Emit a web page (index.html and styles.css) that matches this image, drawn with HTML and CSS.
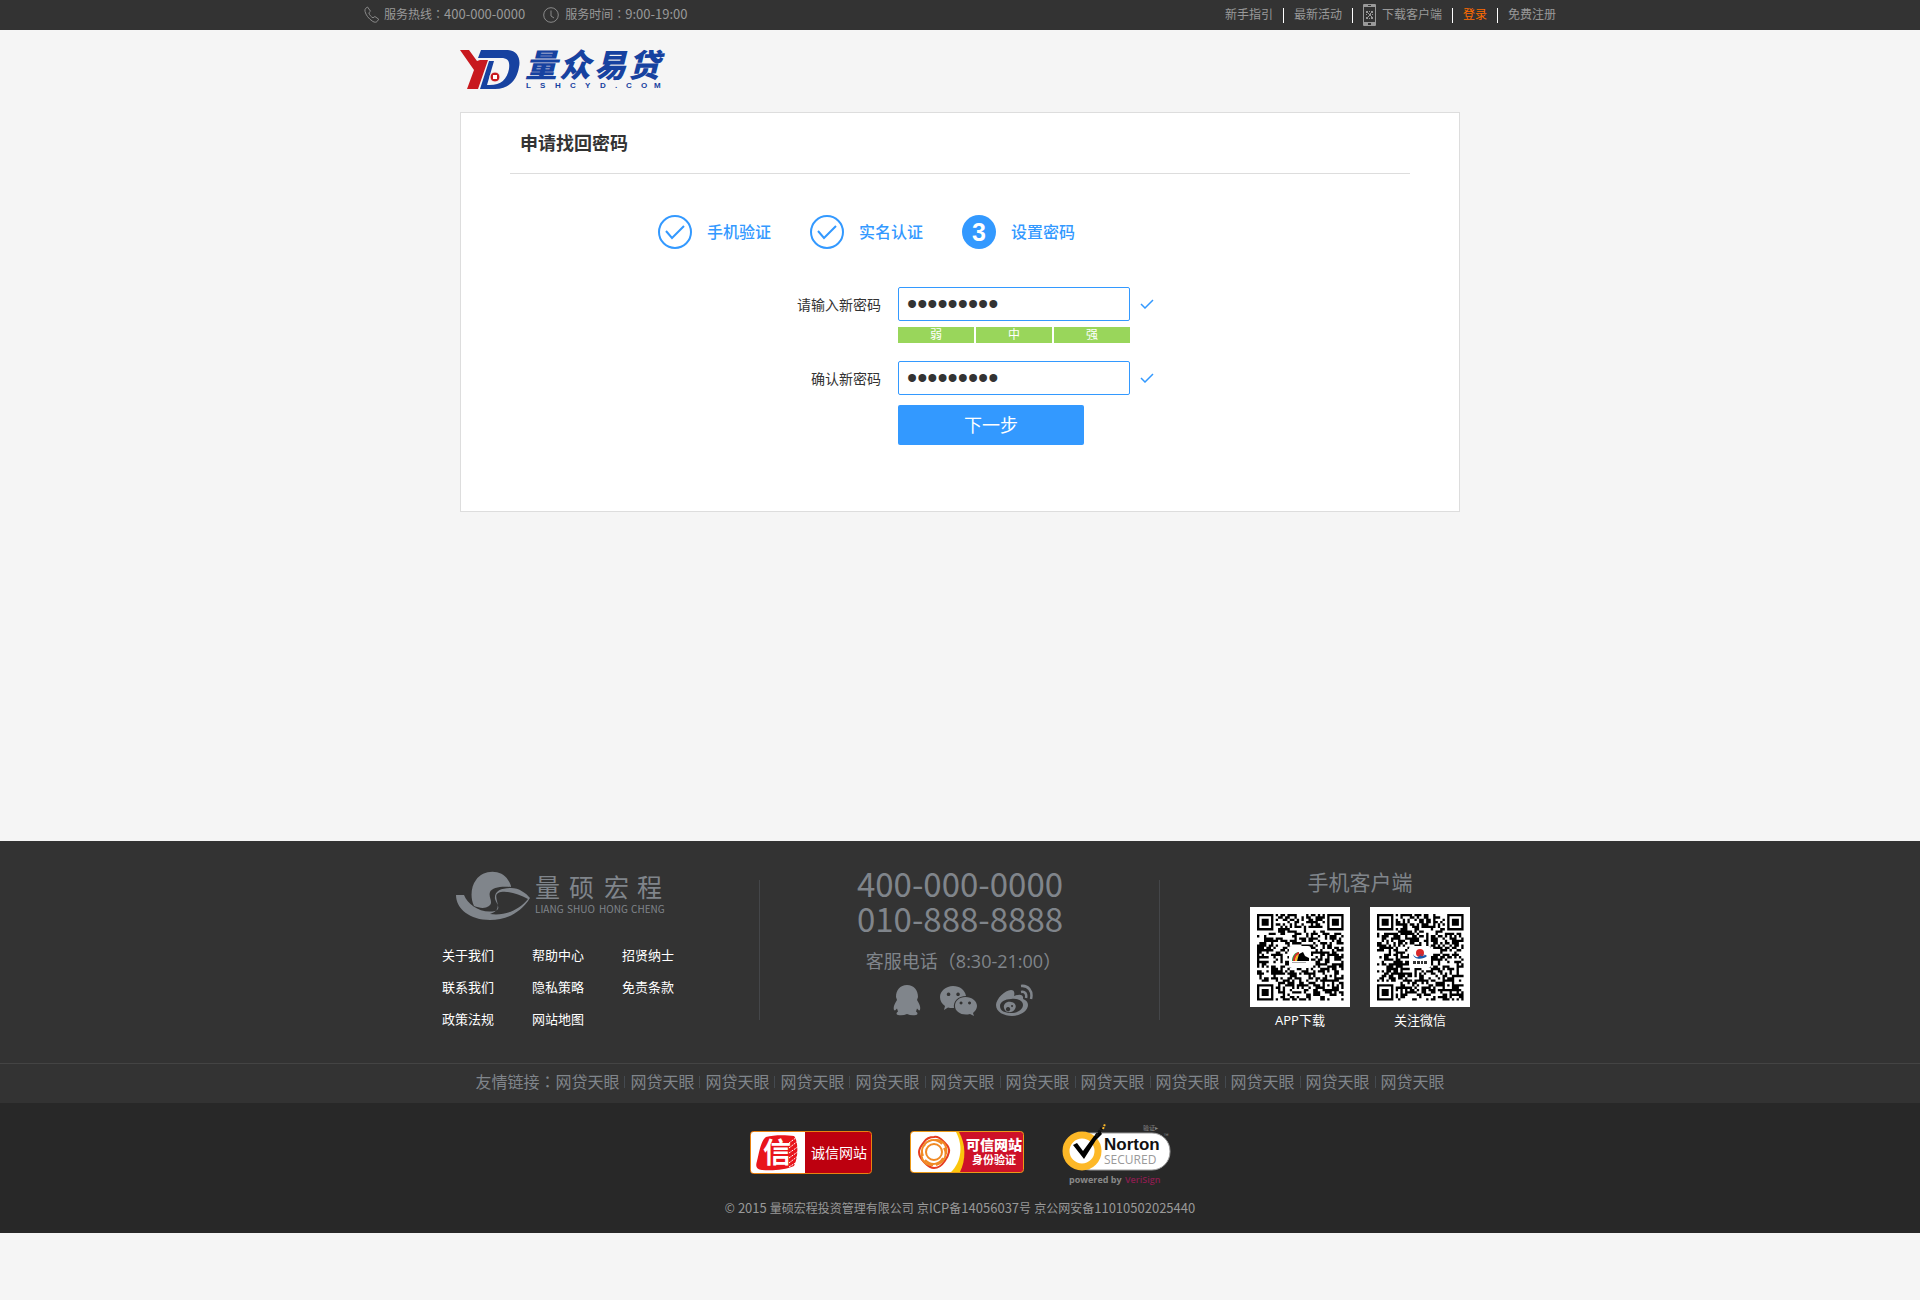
FILE: index.html
```html
<!DOCTYPE html>
<html lang="zh-CN">
<head>
<meta charset="utf-8">
<title>申请找回密码</title>
<link rel="stylesheet" href="styles.css">
</head>
<body>
<div class="topbar">
  <div class="wide topbar-inner">
    <div class="service">
      <svg class="ico-phone" width="16" height="18" viewBox="0 0 16 18"><path d="M1.500 2.500 3.500 1l3 4.200-1.700 1.600c.7 2.200 2 3.800 4.200 5l1.900-1.300 3.800 2.700-1.600 2.300c-1 1-2.600.9-4.200 0C4.600 12.700 1.800 9 1 5.300c-.2-1.200 0-2.200.5-2.800z"/></svg>
      <span>服务热线<span lang="zh-TW" class="centered">：</span><span class="num">400-000-0000</span></span>
      <svg class="ico-clock" width="16" height="16" viewBox="0 0 16 16"><circle cx="8" cy="8" r="7.300"/><path d="M8 3.500V9l3 2"/></svg>
      <span>服务时间<span lang="zh-TW" class="centered">：</span><span class="num">9:00-19:00</span></span>
    </div>
    <nav class="topnav">
      <a href="#">新手指引</a>
      <a href="#">最新活动</a>
      <a href="#" class="app"><svg width="13" height="22" viewBox="0 0 13 22"><path fill="#999" fill-rule="evenodd" d="M1 0h11q1 0 1 1v20q0 1-1 1H1q-1 0-1-1V1q0-1 1-1zm0 3v15h11V3zM5 1v1h3V1zM5 19v2h3v-2z"/><path fill="#999" d="M3 7h2v2H3zM6 7h1v1H6zM8 7h2v2H8zM5 9h1v1H5zM7 9h1v1H7zM3 10h1v1H3zM6 10h2v2H6zM9 10h1v1H9zM5 12h1v1H5zM8 12h1v1H8zM3 13h2v2H3zM6 14h1v1H6zM8 13h2v2H8z"/></svg>下载客户端</a>
      <a href="#" class="login">登录</a>
      <a href="#">免费注册</a>
    </nav>
  </div>
</div>

<header class="page header">
  <a href="#" aria-label="量众易贷">
    <svg width="220" height="48" viewBox="0 -6 220 48">
      <path fill="#c8191e" d="M0 1h9l8 11 3-1h8L18 40H7l7-19z"/>
      <path fill="#1742a0" d="M21 1h25c11 0 15 8 13 17-2 13-10 22-24 22H20l9-28h5l-7 24c13 1 20-5 22-16 1-8-1-11-8-11H18z"/>
      <circle cx="35" cy="28" r="5" fill="#c8191e" stroke="#f4f4f4"/><path fill="#fff" d="M33 26h4v4h-4z"/>
      <text class="brand-name" x="65 99 134 168" y="28">量众易贷</text>
      <text class="brand-url" x="66 80 95 110 125 140 155 166 181 194" y="39">LSHCYD.COM</text>
    </svg>
  </a>
</header>

<main class="page card">
  <h1>申请找回密码</h1>
  <ol class="steps">
    <li><svg width="34" height="34" viewBox="0 0 34 34"><circle cx="17" cy="17" r="16"/><path d="m8 16 6 7L26 11"/></svg>手机验证</li>
    <li><svg width="34" height="34" viewBox="0 0 34 34"><circle cx="17" cy="17" r="16"/><path d="m8 16 6 7L26 11"/></svg>实名认证</li>
    <li><span class="current">3</span>设置密码</li>
  </ol>
  <form>
    <label for="pw">请输入新密码</label>
    <div class="field"><input id="pw" type="password" value="abc123456"><svg width="14" height="10" viewBox="0 0 14 10"><path d="M1 5l4 4 8-8"/></svg></div>
    <div class="strength"><span>弱</span><span>中</span><span>强</span></div>
    <label for="pw2">确认新密码</label>
    <div class="field"><input id="pw2" type="password" value="abc123456"><svg width="14" height="10" viewBox="0 0 14 10"><path d="M1 5l4 4 8-8"/></svg></div>
    <button type="button">下一步</button>
  </form>
</main>

<footer>
  <div class="wide columns">
    <section class="about">
      <svg width="216" height="50" viewBox="0 0 216 50" fill="#80858b">
        <path d="M18 35C14 27 15 15 20 9 27-2 46-2 52 9c2 3 3 5 3 7-9-1-19 0-21 5-2 6 4 10-1 14-4 3-10 2-15 0z"/>
        <path d="M0 24h8c4 10 17 19 31 16 7-2 1-8 0-12-1-8 6-11 16-11 8 0 15 5 19 10-10 16-25 22-40 22C14 49 0 38 0 24zm34 19c14 2 28-3 38-15-9-5-19-8-27-7-6 1-5 5-4 9 2 7 0 11-7 13z"/>
        <text class="company" x="79 113 148 181" y="26">量硕宏程</text>
        <text class="pinyin" x="79" y="42">LIANG</text><text class="pinyin" x="111" y="42">SHUO</text><text class="pinyin" x="143" y="42">HONG</text><text class="pinyin" x="175" y="42">CHENG</text>
      </svg>
      <nav class="site-links">
        <a href="#">关于我们</a><a href="#">帮助中心</a><a href="#">招贤纳士</a>
        <a href="#">联系我们</a><a href="#">隐私策略</a><a href="#">免责条款</a>
        <a href="#">政策法规</a><a href="#">网站地图</a>
      </nav>
    </section>
    <section class="contact">
      <p class="tel">400-000-0000<br>010-888-8888</p>
      <p class="hours">客服电话<span lang="zh-TW" class="centered">（</span>8:30-21:00<span lang="zh-TW" class="centered">）</span></p>
      <div class="social">
        <a href="#" aria-label="QQ"><svg width="28" height="32" viewBox="0 0 28 32"><path d="M14 1c7 0 11 5 11 12l-1 3c2 3 4 7 3 10l-1 .5-2-2-1 3c2 1 2 3 0 3.500-3 .6-6 .4-9-1-3 1.400-6 1.600-9 1-2-.5-2-2.500 0-3.500l-1-3-2 2-1-.5c-1-3 1-7 3-10l-1-3C3 6 7 1 14 1z"/></svg></a>
        <a href="#" aria-label="微信"><svg width="37" height="32" viewBox="0 0 37 32"><path fill-rule="evenodd" d="M13 2c7 0 12 4 13 10-8 0-13 5-12 12-2 .2-4 0-6-.5L4 26l1-4C2 20 0 17 0 13 0 7 6 2 13 2zM8.500 8.500a1.800 1.800 0 1 0 .1 0zm9.500 0a1.800 1.800 0 1 0 .1 0z"/><path fill-rule="evenodd" d="M25.500 13C32 13 37 17 37 22c0 3-2 5-4 7l1 3-4-2c-8 2-15-2-15-8 0-5 4-9 10.500-9zM21 17.500a1.500 1.500 0 1 0 .1 0zm8.500 0a1.500 1.500 0 1 0 .1 0z"/></svg></a>
        <a href="#" aria-label="微博"><svg width="38" height="32" viewBox="0 0 38 32"><path fill-rule="evenodd" d="M0 21C0 15 9 6 15 6c3 0 4 2 3 6 5-2 10-2 9 3 3 1 5 3 5 6 0 6-8 11-16 11S0 28 0 21zm4 1c0 5 5 7 11 7 7 0 12-4 12-8 0-5-6-7-12-6-6 0-11 3-11 7z"/><path fill-rule="evenodd" d="M8 24c-1-4 3-7 7-6 4 0 6 4 4 7-3 5-10 4-11-1zm4-1a2.200 2.200 0 1 0 .1 0zm4-2a1 1 0 1 0 .1 0z"/><path class="wave" d="M25 2c7-1 12 5 10 13M25 8c4-1 6 2 5 6"/></svg></a>
      </div>
    </section>
    <section class="mobile">
      <h2>手机客户端</h2>
      <div class="codes">
        <figure>
          <svg class="qr" data-seed="7" width="100" height="100" viewBox="0 0 100 100"><rect width="100" height="100" fill="#fff"/><path class="modules" transform="translate(7 7) scale(2.340)"/><rect x="39" y="39" width="22" height="22" rx="3" fill="#fff"/><path fill="#2b9b48" d="M42 54c0-5 3-9 7-9v2c-3 0-4 3-5 7z"/><path fill="#d8282a" d="M43 54c0-4 2-8 6-9v3c-2 0-3 2-4 6z"/><path fill="#f4bb24" d="M45 54c0-3 1-6 4-7v2l-2 5z"/><path d="M47 54l2-7 4-2 2 4 4 2v3z"/><path fill="#aaa" d="M42 55h14v1H42z"/></svg>
          <figcaption>APP下载</figcaption>
        </figure>
        <figure>
          <svg class="qr" data-seed="23" width="100" height="100" viewBox="0 0 100 100"><rect width="100" height="100" fill="#fff"/><path class="modules" transform="translate(7 7) scale(2.340)"/><rect x="39" y="39" width="22" height="22" rx="3" fill="#fff"/><circle cx="50" cy="46" r="4" fill="#d8282a"/><path fill="#1c58a8" fill-rule="evenodd" d="M43 47c2 4 6 4 7 1 4-2 6 0 7 1-4 4-13 4-14-2zm7 2c2 0 3 0 5-1-2-1-4 0-5 1z"/><path fill="#333" d="M43 54h3v3h-3zM47 54h3v3h-3zM51 54h2v3h-2zM54 54h3v3h-3z"/></svg>
          <figcaption>关注微信</figcaption>
        </figure>
      </div>
    </section>
  </div>
  <div class="friends">
    <span>友情链接<span lang="zh-TW" class="centered">：</span></span>
    <nav><a href="#">网贷天眼</a><a href="#">网贷天眼</a><a href="#">网贷天眼</a><a href="#">网贷天眼</a><a href="#">网贷天眼</a><a href="#">网贷天眼</a><a href="#">网贷天眼</a><a href="#">网贷天眼</a><a href="#">网贷天眼</a><a href="#">网贷天眼</a><a href="#">网贷天眼</a><a href="#">网贷天眼</a></nav>
  </div>
  <div class="legal">
    <div class="seals">
      <a href="#" aria-label="诚信网站"><svg width="122" height="43" viewBox="0 0 122 43"><rect x=".5" y=".5" width="121" height="42" rx="3" fill="#bd000f"/><path fill="#fff" d="M1 1h54v41H1z"/><rect x=".5" y=".5" width="121" height="42" rx="3" fill="none" stroke="#e88210"/><path fill="#e9151b" d="M16 6c7-2 19-2 28-1 4 4 5 20 0 30-9 4-22 5-32 4-5-1-7-3-5-9 2-8 4-21 9-24z"/><path fill="none" stroke="#fff" stroke-width="1" stroke-dasharray="2 1" d="m39 12 8-6m-8 11 9-7m-9 12 10-7m-10 12 10-7m-10 12 9-7m-9 11 8-5"/><text class="seal-char" x="13" y="32">信</text><text class="seal-label" x="61" y="27">诚信网站</text></svg></a>
      <a href="#" aria-label="可信网站身份验证"><svg width="114" height="42" viewBox="0 0 114 42"><rect x=".5" y=".5" width="113" height="41" rx="3" fill="#ce1229"/><path fill="#fbc60b" d="M3 1h46c7 12 7 28 1 40H3q-2 0-2-2V3q0-2 2-2z"/><path fill="#fff" d="M3 1h43c7 13 6 29-5 40H3q-2 0-2-2V3q0-2 2-2z"/><rect x=".5" y=".5" width="113" height="41" rx="3" fill="none" stroke="#eb9a18"/><g fill="none" stroke-width="2"><path stroke="#e63c20" d="M24 6c5-1 8 3 10 5s6 5 5 10-3 7-5 10-5 6-10 6-7-3-10-6-5-6-5-10 3-7 5-10 5-5 10-5z"/><g stroke="#f08a26"><path d="M14 15c3-7 12-8 18-2M25 9c8-1 13 6 11 14M34 17c4 7 0 15-8 17M33 27c-4 7-12 8-18 2M23 34c-8 1-13-6-11-14M13 25c-3-7 1-14 9-16"/><circle cx="24" cy="21" r="8"/></g></g><text class="trust-title" x="56" y="19">可信网站</text><text class="trust-sub" x="62" y="33">身份验证</text></svg></a>
      <a href="#" aria-label="Norton Secured"><svg width="110" height="64" viewBox="0 0 110 64"><rect x="10" y="10" width="98" height="37" rx="18" fill="#fff" stroke="#999"/><circle cx="20" cy="28" r="16" fill="#fff" stroke="#fdb827" stroke-width="7"/><path d="M11 22l4-2 6 8L32 13l6-5 2 3-6 6-12 19z"/><path stroke="#111" stroke-width="3" stroke-dasharray="3 1" d="m34 13 6-8"/><path stroke="#fdb827" stroke-width="2" stroke-dasharray="2 1" d="m41 6 2-5"/><text class="norton" x="42" y="27">Norton</text><text class="secured" x="42" y="41">SECURED</text><text class="powered" x="7" y="60">powered by</text><text class="powered verisign" x="63" y="60">VeriSign</text><text class="verify" x="81" y="7">验证▸</text><text class="verify" x="102" y="15">™</text></svg></a>
    </div>
    <p>© <span class="num">2015</span> 量硕宏程投资管理有限公司 京<span class="num">ICP</span>备<span class="num">14056037</span>号 京公网安备<span class="num">11010502025440</span></p>
  </div>
</footer>
<script src="qr.js"></script>
</body>
</html>
```
FILE: styles.css
```css
* { box-sizing: border-box; }
body {
  margin: 0;
  background: #f5f5f5;
  color: #333;
  font: 12px/20px "Open Sans", "Noto Sans CJK SC", sans-serif;
}
a { color: inherit; text-decoration: none; }
h1, h2, p, ol, figure { margin: 0; padding: 0; }
svg { display: block; flex: none; }
.wide { max-width: 1200px; margin: 0 auto; }
.page { max-width: 1000px; margin: 0 auto; }
.centered { font-family: "Noto Sans CJK TC", sans-serif; line-height: 1; }
.num { font-family: "Noto Sans CJK SC", sans-serif; font-size: 13px; line-height: 1; }

.topbar { background: #333; color: #999; }
.topbar-inner { display: flex; justify-content: space-between; height: 30px; padding: 0 4px; }
.service, .topnav { display: flex; align-items: center; }
.ico-phone, .ico-clock { fill: none; stroke: #8a8a8a; margin-right: 6px; }
.ico-phone { margin-right: 4px; }
.ico-clock { margin-left: 18px; }
.topnav a { display: flex; align-items: center; height: 15px; padding: 0 10px; border-left: 1px solid #fff; }
.topnav a:first-child { border-left: 0; }
.topnav a:last-child { padding-right: 0; }
.topnav .app { gap: 6px; }
.topnav .login { color: #ff6c00; }

.header { height: 82px; padding-top: 13px; }
.header a { display: inline-block; }
.brand-name { font: italic 900 32px "Noto Sans CJK SC", sans-serif; fill: #1742a0; }
.brand-url { font: bold 8px "Liberation Sans", sans-serif; fill: #1742a0; }

.card { min-height: 400px; padding: 0 49px 65px; background: #fff; border: 1px solid #ddd; }
h1 { padding: 15px 10px 14px; border-bottom: 1px solid #ddd; font-size: 18px; line-height: 31px; }
.steps { display: flex; gap: 39px; padding: 41px 0 0 148px; list-style: none; color: #3399ff; font-size: 16px; font-weight: 500; }
.steps li { display: flex; align-items: center; gap: 15px; }
.steps svg, .field svg { fill: none; stroke: #3399ff; stroke-width: 2; }
.current { width: 34px; height: 34px; border-radius: 50%; background: #3399ff; color: #fff; font: bold 25px/34px "Liberation Sans", sans-serif; text-align: center; }
form { display: grid; grid-template-columns: 371px 1fr; column-gap: 17px; align-items: center; padding-top: 38px; }
label { padding-top: 2px; text-align: right; font-size: 14px; }
.field { display: flex; align-items: center; gap: 10px; }
.field svg { stroke-width: 1.500; }
.field input { width: 232px; height: 34px; padding: 0 8px; border: 1px solid #3399ff; border-radius: 2px; background: #fff; color: #333; font: 29px "Liberation Sans", sans-serif; outline: 0; }
.strength { grid-column: 2; display: grid; grid-template-columns: repeat(3, 76px); gap: 2px; margin: 6px 0 18px; color: #fff; line-height: 16px; text-align: center; }
.strength span { background: #99d65b; }
button { grid-column: 2; width: 186px; height: 40px; margin-top: 10px; padding: 0; border: 0; border-radius: 2px; background: #3399ff; color: #fff; font: 18px/40px "Open Sans", "Noto Sans CJK SC", sans-serif; }

footer { margin-top: 329px; background: #333; color: #80858b; }
.columns { display: grid; grid-template-columns: repeat(3, 1fr); height: 222px; padding-top: 30px; }
.about { padding-left: 82px; }
.about svg { margin-left: 14px; }
.company { font: 25px "Noto Sans CJK SC", sans-serif; }
.pinyin { font: 10px "Noto Sans CJK SC", sans-serif; }
.site-links { display: grid; grid-template-columns: repeat(3, 90px); margin-top: 18px; color: #fff; font-size: 13px; line-height: 32px; }
.contact { display: flex; flex-direction: column; align-items: center; position: relative; }
.contact::before, .contact::after { content: ""; position: absolute; top: 9px; left: -1px; width: 1px; height: 140px; background: #444649; }
.contact::after { left: auto; right: 0; }
.tel { margin-top: -5px; font: 33px/35px "Noto Sans CJK SC", sans-serif; }
.hours { margin: 11px 0 0 7px; font-size: 18px; line-height: 28px; }
.social { display: flex; gap: 19px; margin: 9px 0 0 6px; fill: #80858b; }
.wave { fill: none; stroke: #80858b; stroke-width: 2.500; }
.mobile { display: flex; flex-direction: column; align-items: center; }
h2 { padding-top: 1px; font-size: 21px; font-weight: 400; line-height: 20px; }
.codes { display: flex; gap: 20px; margin-top: 15px; }
figcaption { padding-top: 3px; color: #fff; font-size: 13px; text-align: center; }
.friends { display: flex; justify-content: center; height: 40px; border-top: 1px solid #444; font-size: 16px; line-height: 36px; }
.friends nav { display: flex; align-items: center; height: 36px; }
.friends a { padding: 0 5px; border-left: 1px solid #444a50; line-height: 12px; }
.friends a:first-child { padding-left: 0; border-left: 0; }
.friends a:last-child { padding-right: 0; }
.legal { height: 130px; padding-top: 20px; background: #282828; color: #999; text-align: center; }
.seals { display: flex; justify-content: center; align-items: flex-start; gap: 38px; height: 76px; padding-left: 1px; }
.seals a { padding-top: 8px; }
.seals a:last-child { padding-top: 0; }
.seal-char { font: bold 28px "Noto Sans CJK SC", sans-serif; fill: #fff; }
.seal-label { font: 14px "Noto Sans CJK SC", sans-serif; fill: #fff; }
.trust-title { font: 900 14px "Noto Sans CJK SC", sans-serif; fill: #fff; }
.trust-sub { font: bold 11px "Noto Sans CJK SC", sans-serif; fill: #fff; }
.norton { font: bold 17px "Liberation Sans", sans-serif; fill: #111; }
.secured { font: 12px "Open Sans", sans-serif; fill: #999; }
.powered { font: bold 9px "Open Sans", sans-serif; fill: #888; }
.powered.verisign { fill: #8b1d4f; font-weight: 600; }
.verify { font: 6px "Noto Sans CJK SC", sans-serif; fill: #888; }
```
FILE: qr.js
```js
// Draws each download code as a 37x37 grid of modules.
const SIZE = 37;

function ring(x, y, cx, cy, outer) {
  const d = Math.max(Math.abs(x - cx), Math.abs(y - cy));
  if (d > outer + 1) return null;
  if (outer === 3) return d === 3 || d < 2;
  return d > outer ? null : d !== 1;
}

document.querySelectorAll('.qr').forEach(function (svg) {
  let seed = Number(svg.dataset.seed);
  let path = '';
  for (let y = 0; y < SIZE; y++) {
    for (let x = 0; x < SIZE; x++) {
      seed = (seed * 1103515245 + 12345) % 2147483648;
      let on = seed / 2147483648 < 0.5;
      [[3, 3, 3], [33, 3, 3], [3, 33, 3], [30, 30, 2]].forEach(function (f) {
        const r = ring(x, y, f[0], f[1], f[2]);
        if (r !== null) on = r;
      });
      if (on) path += 'M' + x + ' ' + y + 'h1v1h-1z';
    }
  }
  svg.querySelector('.modules').setAttribute('d', path);
});
```
